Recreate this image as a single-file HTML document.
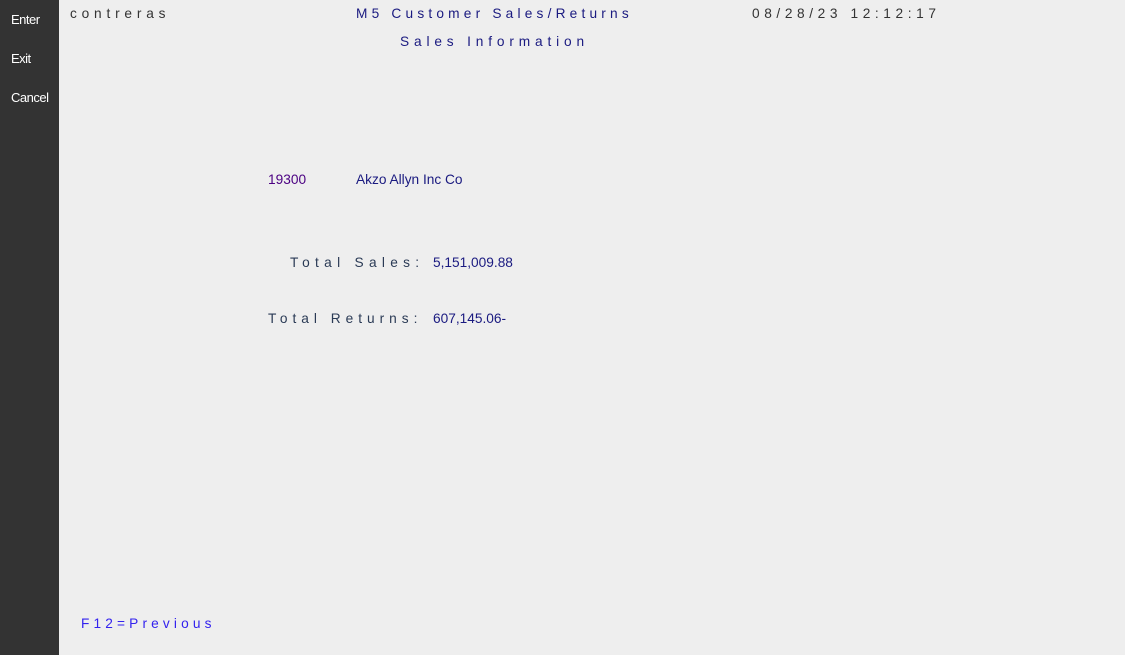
<!DOCTYPE html>
<html><head><style>
body{margin:0;width:1125px;height:655px;background:#eeeeee;font-family:"Liberation Sans",Arial,sans-serif;position:relative;overflow:hidden}
.side{position:absolute;left:0;top:0;width:59px;height:655px;background:#333333}
.side div{position:absolute;left:11px;color:#fff;font-size:13px;letter-spacing:-0.5px}
.t{position:absolute;font-size:13.7px;white-space:nowrap;line-height:16px}
</style></head><body>
<div class="side"><div style="top:12px">Enter</div><div style="top:51px">Exit</div><div style="top:90px">Cancel</div></div>
<div class="t" style="left:70px;top:6px;color:#333;letter-spacing:4.8px">contreras</div>
<div class="t" style="left:356px;top:6px;color:#1a1a80;letter-spacing:4.2px">M5 Customer Sales/Returns</div>
<div class="t" style="left:752px;top:6px;color:#333;letter-spacing:4.6px">08/28/23 12:12:17</div>
<div class="t" style="left:400px;top:34px;color:#1a1a80;letter-spacing:4.85px">Sales Information</div>
<div class="t" style="left:268px;top:172px;color:#4b0082">19300</div>
<div class="t" style="left:356px;top:172px;color:#1a1a80">Akzo Allyn Inc Co</div>
<div class="t" style="left:290px;top:255px;color:#2a3a55;letter-spacing:5.3px">Total Sales:</div>
<div class="t" style="left:433px;top:255px;color:#1a1a80">5,151,009.88</div>
<div class="t" style="left:268px;top:311px;color:#2a3a55;letter-spacing:5.0px">Total Returns:</div>
<div class="t" style="left:433px;top:311px;color:#1a1a80">607,145.06-</div>
<div class="t" style="left:81px;top:616px;color:#3322ee;letter-spacing:4.15px">F12=Previous</div>
</body></html>
